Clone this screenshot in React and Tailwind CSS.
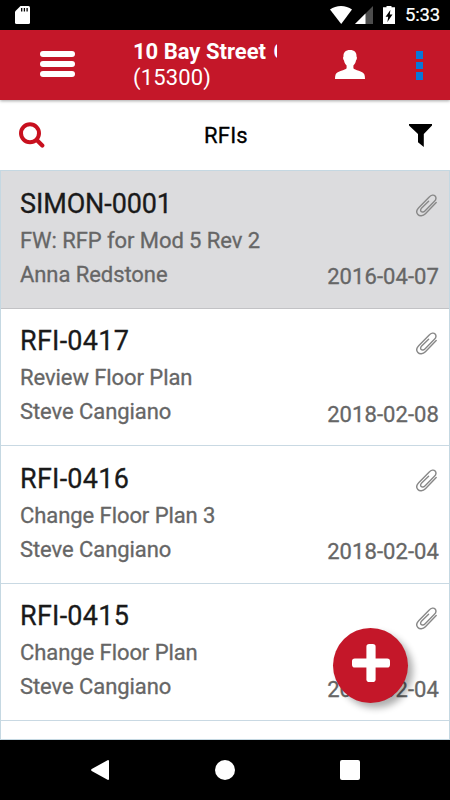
import React from 'react';

const rfis = [
  { id: 'SIMON-0001', subject: 'FW: RFP for Mod 5 Rev 2', author: 'Anna Redstone', date: '2016-04-07', selected: true },
  { id: 'RFI-0417', subject: 'Review Floor Plan', author: 'Steve Cangiano', date: '2018-02-08' },
  { id: 'RFI-0416', subject: 'Change Floor Plan 3', author: 'Steve Cangiano', date: '2018-02-04' },
  { id: 'RFI-0415', subject: 'Change Floor Plan', author: 'Steve Cangiano', date: '2018-02-04' },
];

const PaperclipIcon = ({ className }) => (
  <svg viewBox="0 0 22 23" className={className} fill="none" stroke="currentColor" strokeWidth="1.4" strokeLinecap="round">
    <path d="M20.2 8.6 L9.4 19.7 C6.9 22.2 3.6 22.4 1.9 20.5 C0.3 18.7 0.5 16 2.7 13.8 L13 3.2 C15.3 .9 17.8 .5 19.1 2 C20.4 3.5 20.2 5.5 18.2 7.5 L9.4 16.5 C7.7 18.2 6.2 18.5 5.2 17.5 C4.2 16.5 4.5 15.2 5.9 13.8 L12.6 7.2" />
  </svg>
);

const StatusBar = () => (
  <div className="flex h-[30px] shrink-0 items-center bg-black pl-[15px] pr-[11px] text-white">
    <svg viewBox="0 0 15 18" className="h-[18px] w-[15px]">
      <path fill="#fff" d="M5.5 0H13.5Q15 0 15 1.5V16.5Q15 18 13.5 18H1.5Q0 18 0 16.5V5.5Z" />
      <path stroke="#000" strokeWidth="1.3" d="M6.7 2v3.5M9.4 2v3.5M12.1 2v3.5" />
    </svg>
    <svg viewBox="0 0 22 18" className="ml-auto h-[18px] w-[22px]">
      <path fill="#fff" d="M0 3.6C6-1.2 16-1.2 22 3.6L11.2 18Z" />
    </svg>
    <svg viewBox="0 0 18 18" className="ml-[3px] h-[18px] w-[18px]">
      <path fill="#4d4d4d" d="M18 0V18H0Z" />
      <path fill="#fff" d="M10.5 7.5V18H0Z" />
    </svg>
    <svg viewBox="0 0 12 18" className="ml-[10px] h-[18px] w-[12px]">
      <path fill="#fff" d="M3.5 1.2V0H8.5V1.2H12V18H0V1.2Z" />
      <path fill="#000" d="M7.4 4L2.6 10.7H5.2L4.4 15.9L9.5 8.6H6.8Z" />
    </svg>
    <span className="ml-[10px] mt-px w-[34px] whitespace-nowrap text-[18.5px] leading-none tracking-[-0.2px] [-webkit-text-stroke:0.2px]">5:33</span>
  </div>
);

const Header = () => (
  <header className="z-10 flex h-[70px] shrink-0 bg-[#c41729] text-white shadow-[0_1px_3px_rgba(0,0,0,0.35)]">
    <div className="ml-10 mt-[21px] flex w-[35px] flex-col gap-1">
      <span className="h-1.5 rounded-[3px] bg-white" />
      <span className="h-1.5 rounded-[3px] bg-white" />
      <span className="h-1.5 rounded-[3px] bg-white" />
    </div>
    <div className="ml-[58px] mt-[9px] w-[143.5px] overflow-hidden whitespace-nowrap text-[22px] leading-[26px]">
      <p className="font-bold">10 Bay Street <span className="ml-[2px]">C</span></p>
      <p className="tracking-[0.15px]">(15300)</p>
    </div>
    <svg viewBox="0 0 30 29" className="ml-[58.5px] mt-5 h-[29px] w-[30px]">
      <path fill="#fff" d="M15 0C19.5 0 21.8 2.5 21.5 6.5C22.3 7 22 9.5 21 10.5C20.5 13 19.6 14.3 18.4 15.5V18.2C19.5 20.2 28 20.8 29.4 24.5Q30 26 30 29H0Q0 26 .6 24.5C2 20.8 10.5 20.2 11.6 18.2V15.5C10.4 14.3 9.5 13 9 10.5C8 9.5 7.7 7 8.5 6.5C8.2 2.5 10.5 0 15 0Z" />
    </svg>
    <div className="ml-[51px] mt-[21px] flex w-[7px] flex-col gap-[3px]">
      <span className="h-[7.5px] bg-[#0878d8]" />
      <span className="h-[7.5px] bg-[#0878d8]" />
      <span className="h-[7.5px] bg-[#0878d8]" />
    </div>
  </header>
);

const TitleBar = () => (
  <div className="flex h-[70px] shrink-0 items-center justify-between pl-[19px] pr-[18px]">
    <svg viewBox="0 0 26 26" className="h-[26px] w-[26px]" fill="none" stroke="#c8101e" strokeLinecap="round">
      <circle cx="11" cy="11.3" r="9" strokeWidth="4" />
      <path strokeWidth="4.2" d="M17.8 18L23.3 23.5" />
    </svg>
    <h1 className="-ml-[2px] mt-px text-[22px] leading-none tracking-[0.2px] text-black [-webkit-text-stroke:0.3px]">RFIs</h1>
    <svg viewBox="0 0 23 23" className="h-[23px] w-[23px]">
      <path fill="#000" d="M0 0H23V1.5L14.8 10V23L9 18.3V10L0 1.5Z" />
    </svg>
  </div>
);

const RfiRow = ({ rfi }) => (
  <li
    className={`flex h-[137.6px] justify-between border-b pl-[19px] pr-2.5 ${
      rfi.selected ? 'border-[#c2c2c5] bg-[#dcdcde]' : 'border-[#c9d9e3] bg-white'
    }`}
  >
    <div className="whitespace-nowrap pt-[15.5px] text-[22px] tracking-[-0.07px] text-[#666] [-webkit-text-stroke:0.3px]">
      <h2 className={`text-[27px] leading-[34px] text-[#1a1a1a] ${rfi.selected ? 'tracking-[-0.1px]' : 'tracking-[0.25px]'}`}>
        {rfi.id}
      </h2>
      <p className="mt-[3px] leading-[34px]">{rfi.subject}</p>
      <p className="leading-[34px]">{rfi.author}</p>
    </div>
    <div className="flex flex-col items-end pt-[23px]">
      <PaperclipIcon className="mr-px h-[23px] w-[22px] text-[#888]" />
      <span className="mt-[43px] whitespace-nowrap text-[22px] leading-[34px] tracking-[0.08px] text-[#666] [-webkit-text-stroke:0.3px]">{rfi.date}</span>
    </div>
  </li>
);

const NavBar = () => (
  <nav className="flex h-[60px] shrink-0 items-center bg-black">
    <svg viewBox="0 0 18 20" className="ml-[91px] h-5 w-[18px]">
      <path fill="#fff" d="M17 0Q18 0 18 1V19Q18 20 17 20L.7 11Q-.5 10 .7 9Z" />
    </svg>
    <span className="ml-[106px] h-5 w-5 rounded-full bg-white" />
    <span className="ml-[105px] h-[19.5px] w-[19.5px] rounded-[2px] bg-white" />
  </nav>
);

const App = () => {
  return (
    <div className="relative flex h-[800px] w-[450px] flex-col overflow-hidden bg-white font-['Roboto',sans-serif]">
      <StatusBar />
      <Header />
      <TitleBar />
      <ul className="flex-1 overflow-hidden border border-[#c5d8e2]">
        {rfis.map((rfi) => (
          <RfiRow key={rfi.id} rfi={rfi} />
        ))}
      </ul>
      <NavBar />

      {/* floating add button */}
      <button className="absolute left-[332.5px] top-[627.5px] flex h-[75px] w-[75px] items-center justify-center rounded-full bg-[#c41729] shadow-[5px_5px_7px_rgba(0,0,0,0.32)]">
        <svg viewBox="0 0 38 38" className="ml-[2.5px] mt-[-4px] h-[38px] w-[38px]">
          <rect x="14.4" width="9.2" height="38" rx="2.8" fill="#fff" />
          <rect y="14.4" width="38" height="9.2" rx="2.8" fill="#fff" />
        </svg>
      </button>
    </div>
  );
};

export default App;
